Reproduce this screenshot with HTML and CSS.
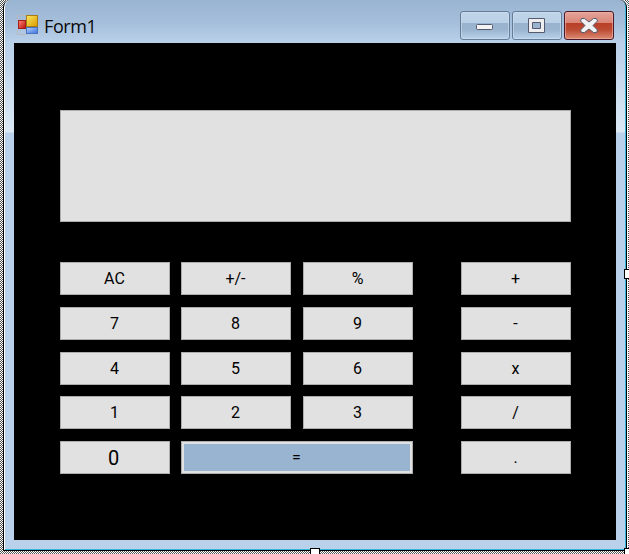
FILE: index.html
```html
<!DOCTYPE html>
<html lang="en">
<head>
<meta charset="utf-8">
<title>Form1</title>
<link rel="stylesheet" href="styles.css">
</head>
<body>
<div class="designer">
  <main class="window">
    <header class="titlebar">
      <svg class="app-icon" width="22" height="21" viewBox="0 0 22 21">
        <defs>
          <linearGradient id="gold" x2="1" y2="1"><stop stop-color="#ffe65c"/><stop offset="1" stop-color="#d69a00"/></linearGradient>
          <linearGradient id="red" x2="1" y2="1"><stop stop-color="#ff8a76"/><stop offset="1" stop-color="#b90c08"/></linearGradient>
          <linearGradient id="blue" x2="1" y2="1"><stop stop-color="#b4d0ff"/><stop offset="1" stop-color="#3970dc"/></linearGradient>
        </defs>
        <path d="M.5 5V.5H9M.5 15V19.5H9" fill="none" stroke="#b9b9bd"/>
        <rect x="9.500" y=".5" width="11" height="11" fill="url(#gold)" stroke="#a87a14"/>
        <rect x="1.500" y="5.500" width="7" height="8" fill="url(#red)" stroke="#a51d18"/>
        <rect x="9.500" y="12.500" width="11" height="6" fill="url(#blue)" stroke="#4872bd"/>
      </svg>
      <h1 class="title">Form1</h1>
      <div class="controls">
        <div class="control">
          <svg width="48" height="27" viewBox="0 0 48 27"><rect x="15.500" y="12.500" width="16" height="5" rx="1" fill="#f3f3f3" stroke="#545b70"/></svg>
        </div>
        <div class="control">
          <svg width="48" height="27" viewBox="0 0 48 27"><path fill-rule="evenodd" d="M15.500 6.500H31.500V20.500H15.500ZM19.500 10.500V16.500H27.500V10.500Z" fill="#eeeef0" stroke="#545b70"/></svg>
        </div>
        <div class="control close">
          <svg width="48" height="27" viewBox="0 0 48 27"><path d="M16.500 6.500H19.500L24 10L28.500 6.500H31.500L32.500 9L28 13.500L32.500 18L31.500 20.500H28.500L24 17L19.500 20.500H16.500L15.500 18L20 13.500L15.500 9Z" fill="#f2f2f2" stroke="#545b70" stroke-linejoin="round"/></svg>
        </div>
      </div>
    </header>
    <section class="client">
      <div class="display"></div>
      <div class="keys">
        <div class="key">AC</div><div class="key">+/-</div><div class="key">%</div><div class="key op">+</div>
        <div class="key">7</div><div class="key">8</div><div class="key">9</div><div class="key op">-</div>
        <div class="key">4</div><div class="key">5</div><div class="key">6</div><div class="key op">x</div>
        <div class="key">1</div><div class="key">2</div><div class="key">3</div><div class="key op">/</div>
        <div class="key zero">0</div><div class="key equals">=</div><div class="key op">.</div>
      </div>
    </section>
  </main>
  <i class="handle handle-right"></i>
  <i class="handle handle-bottom"></i>
  <i class="handle handle-corner"></i>
</div>
</body>
</html>
```
FILE: styles.css
```css
* { box-sizing: border-box; }
body { margin: 0; overflow: hidden; }
.designer {
  position: relative;
  width: 629px;
  height: 554px;
  padding: 0 2px 3px 3px;
  overflow: hidden;
  background: repeating-conic-gradient(#555 0 25%, #fff 0 50%) 0 0 / 2px 2px;
}
.window {
  height: 551px;
  padding: 0 9px 9px;
  border: solid #000;
  border-width: 0 1px 1px;
  border-radius: 7px 7px 0 0;
  background: linear-gradient(#99b4d1 0, #a7c0dc 25px, #bad1ea 43px, #bfd4eb 60px, #dce9f5 132px, #b9d1ea 133px);
  box-shadow: inset 1px 0 #fff, inset -1px -1px #35b7dc, 1px 0 #fff;
}
.titlebar { display: flex; height: 43px; padding: 11px 3px 0 5px; }
.app-icon { margin: 4px 0 0 -1px; }
.title {
  margin: 3px 0 0 5px;
  color: #080808;
  font: 400 18px/24px "Open Sans", sans-serif;
  letter-spacing: -0.4px;
}
.controls { display: flex; gap: 2px; margin-left: auto; }
.control {
  width: 50px;
  height: 29px;
  border: 1px solid #647c98;
  border-radius: 3px;
  background: linear-gradient(#c2d5e9 0, #b8cfe5 11px, #99b2cd 11px, #9bb5d0 18px, #b9d3eb 27px);
  box-shadow: inset 0 0 0 1px #d0e1f199;
}
.control svg { display: block; }
.close {
  border-color: #4b1927;
  background: linear-gradient(#e5a49a 0, #d98575 11px, #b93e27 11px, #bd4c34 18px, #dc8b75 27px);
  box-shadow: inset 0 0 0 1px #f0b5aa99;
}
.client {
  width: 602px;
  height: 497px;
  margin-left: 1px;
  padding: 67px 45px 0 46px;
  background: #000;
}
.display { height: 112px; border: 1px solid #adadad; background: #e1e1e1; }
.keys {
  display: grid;
  grid-template-columns: 121px 122px 158px 110px;
  grid-template-rows: 45px 45px 44px 45px 33px;
  margin-top: 40px;
}
.key {
  width: 110px;
  height: 33px;
  border: 1px solid #adadad;
  background: #e1e1e1;
  color: #000;
  font: 400 16px/31px Roboto, sans-serif;
  text-align: center;
  padding-right: 1px;
}
.zero { font: 400 20px/32px Roboto, sans-serif; padding-right: 3px; }
.equals {
  grid-column: 2 / 4;
  width: 232px;
  border: 1px solid #adadad;
  background: #99b4d1;
  box-shadow: inset 0 0 0 2px #e1e1e1;
}
.handle {
  position: absolute;
  width: 10px;
  height: 10px;
  border: 1px solid #000;
  background: #fff;
}
.handle-right { left: 624px; top: 269px; }
.handle-bottom { left: 310px; top: 548px; }
.handle-corner { left: 624px; top: 548px; }
```
